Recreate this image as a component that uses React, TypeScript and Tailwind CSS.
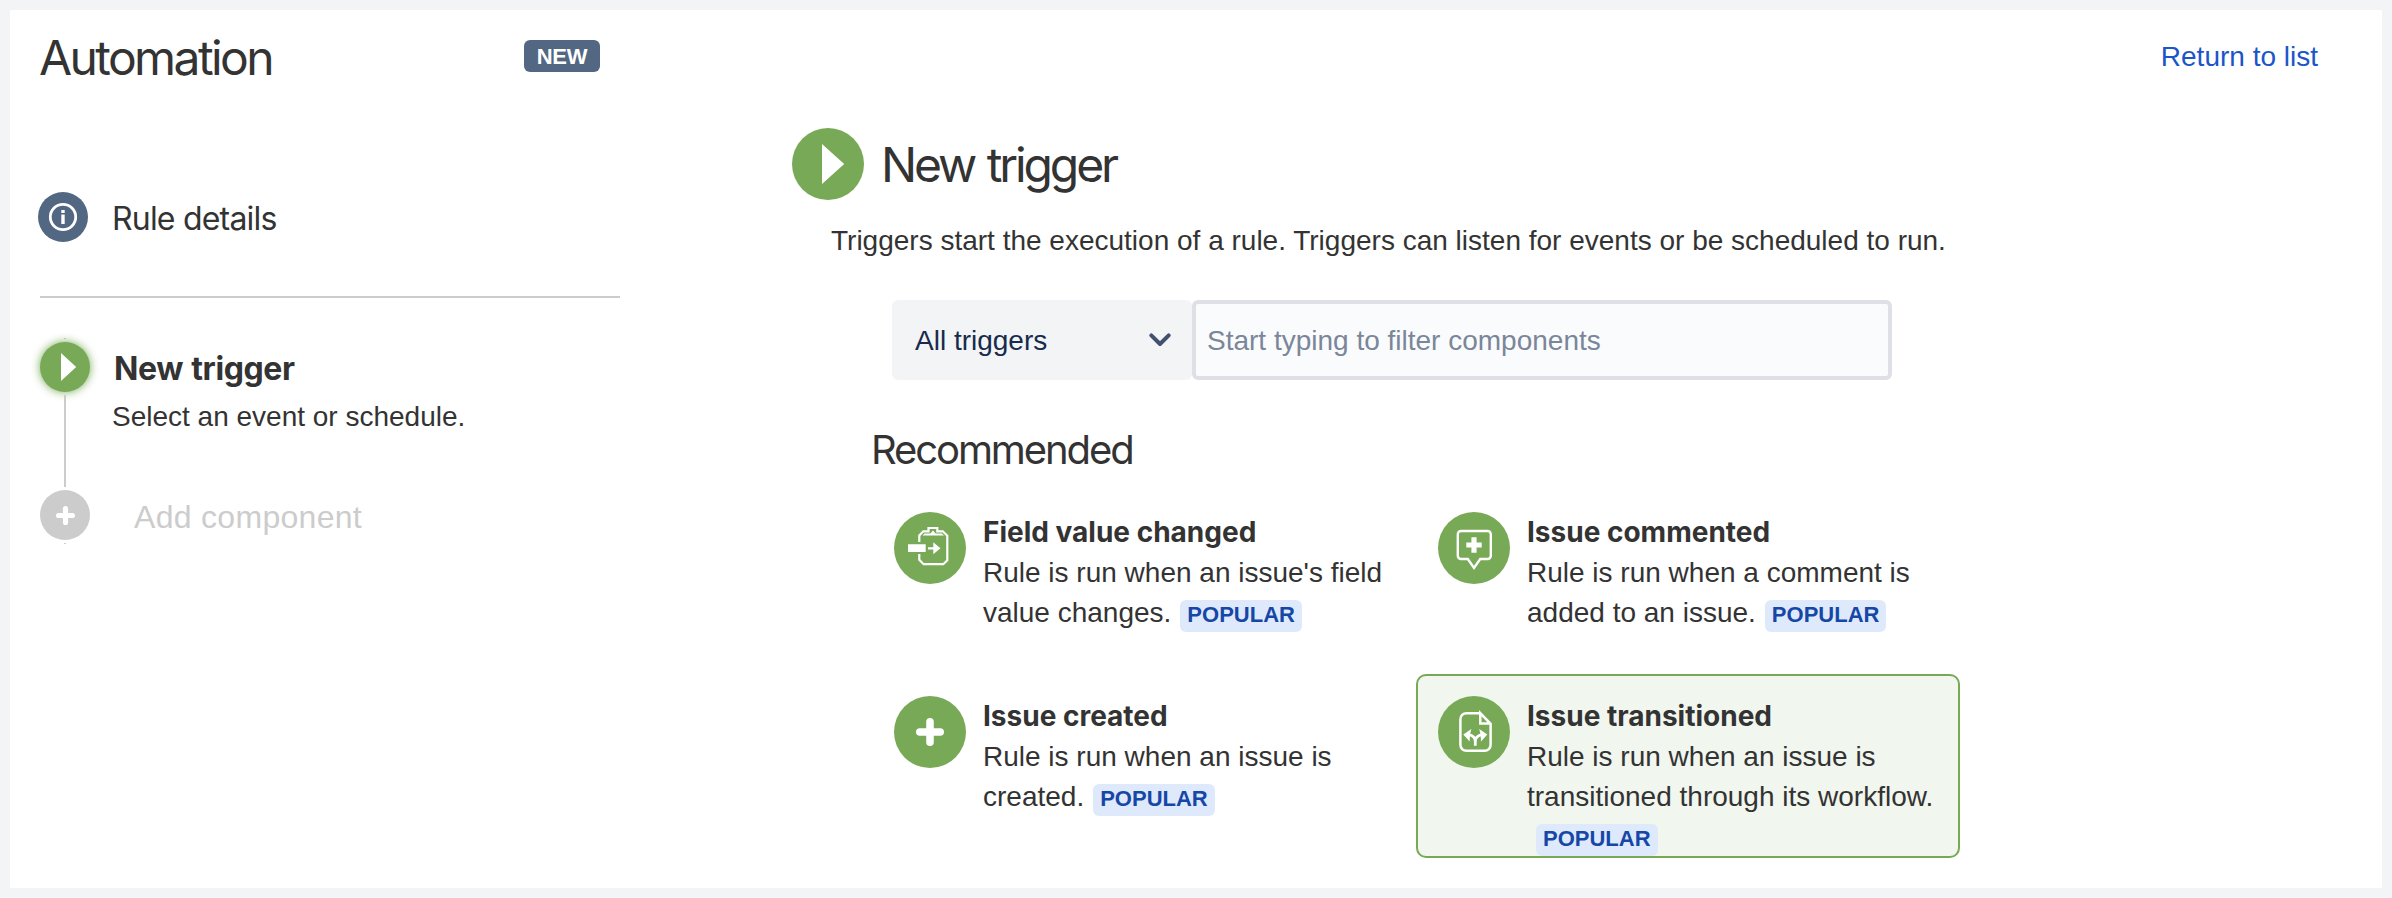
import React from 'react';

const HEADING = "font-['Inter',sans-serif]";

interface Trigger {
  title: string;
  description: string;
  icon: React.ReactNode;
  selected?: boolean;
}

const PlusGlyph: React.FC<{ className: string }> = ({ className }) => (
  <svg viewBox="0 0 28 28" className={className} fill="none" stroke="#fff" strokeWidth="7.6" strokeLinecap="round">
    <path d="M14 3.8V24.2M3.8 14H24.2" />
  </svg>
);

const FieldChangedIcon = () => (
  <svg viewBox="0 0 72 72" className="size-[72px]" fill="none" stroke="#fff" strokeWidth="2.2">
    <path d="M25.3 30V23.5L29.3 19.3H34.5V16H43.3V19.3H48.8L53.3 23.8V48.2L49.3 52.2H29.6L25.3 47.8V42" />
    <path d="M28.5 23.4L30.5 21.6H36.4L39 18.6L41.6 21.6H47.8L50 23.4Z" fill="#fff" stroke="none" />
    <path d="M14 32.3H31.7V40H14ZM34 35.2H39.3V30.3L46.5 36.3L39.3 42.3V37.4H34Z" fill="#fff" stroke="none" />
  </svg>
);

const CommentIcon = () => (
  <svg viewBox="0 0 72 72" className="size-[72px]" fill="none" stroke="#fff" strokeWidth="2.4">
    <path d="M23 19H49.6A3.2 3.2 0 0 1 52.8 22.2V43.8A3.2 3.2 0 0 1 49.6 47H42.2L36 56L29.8 47H23A3.2 3.2 0 0 1 19.8 43.8V22.2A3.2 3.2 0 0 1 23 19Z" />
    <path d="M28.3 33H43.7M36 25.3V40.7" strokeWidth="5.2" />
  </svg>
);

const TransitionIcon = () => (
  <svg viewBox="0 0 72 72" className="size-[72px]" fill="none" stroke="#fff" strokeWidth="2.5">
    <path d="M42.3 17.2H28.4A6 6 0 0 0 22.4 23.2V48.8A6 6 0 0 0 28.4 54.8H46.6A6 6 0 0 0 52.6 48.8V27.8L42.3 17.2V27.4H52.6" />
    <path d="M37.3 49.8V45.5C37.3 41.6 34.5 39.6 31 38.7M37.3 45.5C37.3 41.6 40.1 39.6 43.6 38.7" strokeWidth="2.8" />
    <path d="M25.3 38.6L33.4 33L32 38.2L31.6 45.6ZM49.3 38.6L41.2 33L42.6 38.2L43 45.6Z" fill="#fff" stroke="none" />
  </svg>
);

const TRIGGERS: Trigger[] = [
  {
    title: 'Field value changed',
    description: "Rule is run when an issue's field value changes.",
    icon: <FieldChangedIcon />,
  },
  {
    title: 'Issue commented',
    description: 'Rule is run when a comment is added to an issue.',
    icon: <CommentIcon />,
  },
  {
    title: 'Issue created',
    description: 'Rule is run when an issue is created.',
    icon: <PlusGlyph className="size-7" />,
  },
  {
    title: 'Issue transitioned',
    description: 'Rule is run when an issue is transitioned through its workflow.',
    icon: <TransitionIcon />,
    selected: true,
  },
];

const TriggerCard: React.FC<{ trigger: Trigger }> = ({ trigger }) => (
  <div
    className={`flex h-[184px] gap-[17px] rounded-[10px] border-2 p-5 ${
      trigger.selected ? 'border-[#77a956] bg-[#f1f6ee]' : 'border-transparent'
    }`}
  >
    <div className="flex size-[72px] shrink-0 items-center justify-center rounded-full bg-[#77a956]">
      {trigger.icon}
    </div>
    <div className="flex-1 leading-[40px]">
      <h3 className={`${HEADING} text-[28px] font-bold`}>{trigger.title}</h3>
      <p className="pt-px">
        {trigger.description}
        <span className="ml-[9px] inline-block h-8 rounded-[6px] bg-[#deeafc] px-[7px] text-[22px] leading-[29px] font-bold text-[#1747a6]">
          POPULAR
        </span>
      </p>
    </div>
  </div>
);

const Sidebar = () => (
  <aside className="ml-[30px] w-[580px] shrink-0">
    {/* Page title */}
    <div className="mt-[18px] flex h-14 items-center justify-between pr-5">
      <h1 className={`${HEADING} -ml-px pt-[3px] text-[48px] leading-[56px] tracking-[-2.6px]`}>Automation</h1>
      <span className="h-8 w-[76px] rounded-[6px] bg-[#516782] text-center text-[22px] leading-[33px] font-bold tracking-[-0.3px] text-white">
        NEW
      </span>
    </div>

    <div className="mt-[108px] -ml-[2px] flex h-[50px] items-center gap-6">
      <svg viewBox="0 0 50 50" className="size-[50px]">
        <circle cx="25" cy="25" r="25" fill="#516782" />
        <circle cx="25" cy="25" r="12.7" fill="none" stroke="#fff" strokeWidth="2.8" />
        <path d="M23.3 18h3.4v3h-3.4zM23.3 22.4h3.4V32h-3.4z" fill="#fff" />
      </svg>
      <span className={`${HEADING} pt-1 text-[32px] leading-[40px] tracking-[-0.8px]`}>Rule details</span>
    </div>

    <div className="mt-[54px] h-[2px] bg-[#ccc]" />

    {/* Rule steps */}
    <div className="mt-10 flex">
      <div className="flex w-[50px] flex-col items-center gap-[3px]">
        <span className="h-px w-[2px] bg-[#ccc]" />
        <svg viewBox="0 0 50 50" className="size-[50px] rounded-full bg-[#77a956] shadow-[0_0_10px_#77a956]">
          <path d="M21 11L36.2 25L21 39Z" fill="#fff" />
        </svg>
        <span className="h-[92px] w-[2px] bg-[#ccc]" />
        <span className="flex size-[50px] items-center justify-center rounded-full bg-[#ccc]">
          <PlusGlyph className="size-[19px]" />
        </span>
        <span className="h-px w-[2px] bg-[#ccc]" />
      </div>
      <div className="ml-[22px] pt-[11px] leading-[40px]">
        <h2 className={`${HEADING} ml-[2px] text-[32px] font-bold tracking-[-0.4px] [word-spacing:1px]`}>New trigger</h2>
        <p className="mt-2">Select an event or schedule.</p>
        <p className="mt-[60px] ml-[22px] text-[32px] tracking-[0.3px] text-[#ccc]">Add component</p>
      </div>
    </div>
  </aside>
);

const App: React.FC = () => {
  return (
    <div className="h-[898px] w-[2392px] bg-[#f3f4f6] p-[10px] font-['Liberation_Sans',Arial,sans-serif] text-[28px] text-[#333]">
      <div className="flex h-[878px] bg-white">
        <Sidebar />

        <main className="ml-[172px] w-[1168px] shrink-0 pt-[118px]">
          <div className="flex h-[72px] items-center gap-[17px]">
            <svg viewBox="0 0 72 72" className="size-[72px] rounded-full bg-[#77a956]">
              <path d="M30 16L52.2 36L30 56Z" fill="#fff" />
            </svg>
            <h2 className={`${HEADING} pt-[2px] text-[48px] leading-[56px] tracking-[-3.1px] [word-spacing:2px]`}>
              New trigger
            </h2>
          </div>
          <p className="mt-[21px] ml-[39px] leading-[40px] whitespace-nowrap">
            Triggers start the execution of a rule. Triggers can listen for events or be scheduled to run.
          </p>

          {/* Filters */}
          <div className="mt-[39px] ml-[100px] flex h-20">
            <div className="flex w-[300px] items-center justify-between rounded-[6px] bg-[#f3f4f6] pr-5 pl-[23px] text-[#172b4d]">
              <span className="pt-px">All triggers</span>
              <svg viewBox="0 0 24 24" className="size-6" fill="none" stroke="#42526e" strokeWidth="4" strokeLinecap="round" strokeLinejoin="round">
                <path d="M3.3 7.3L12 16L20.7 7.3" />
              </svg>
            </div>
            <input
              className="w-[700px] rounded-[6px] border-4 border-[#dfe0e5] bg-[#fafbfc] px-[11px] pt-px placeholder:text-[#7a869a]"
              placeholder="Start typing to filter components"
            />
          </div>

          <h3 className={`${HEADING} mt-[46px] ml-[79px] text-[40px] leading-[48px] tracking-[-2.1px]`}>Recommended</h3>
          <div className="mt-4 ml-[80px] grid w-[1088px] grid-cols-2">
            {TRIGGERS.map((trigger) => (
              <TriggerCard key={trigger.title} trigger={trigger} />
            ))}
          </div>
        </main>

        <a href="#" className="mt-[27px] mr-16 ml-auto h-10 leading-[40px] text-[#1b56c8]">
          Return to list
        </a>
      </div>
    </div>
  );
};

export default App;
